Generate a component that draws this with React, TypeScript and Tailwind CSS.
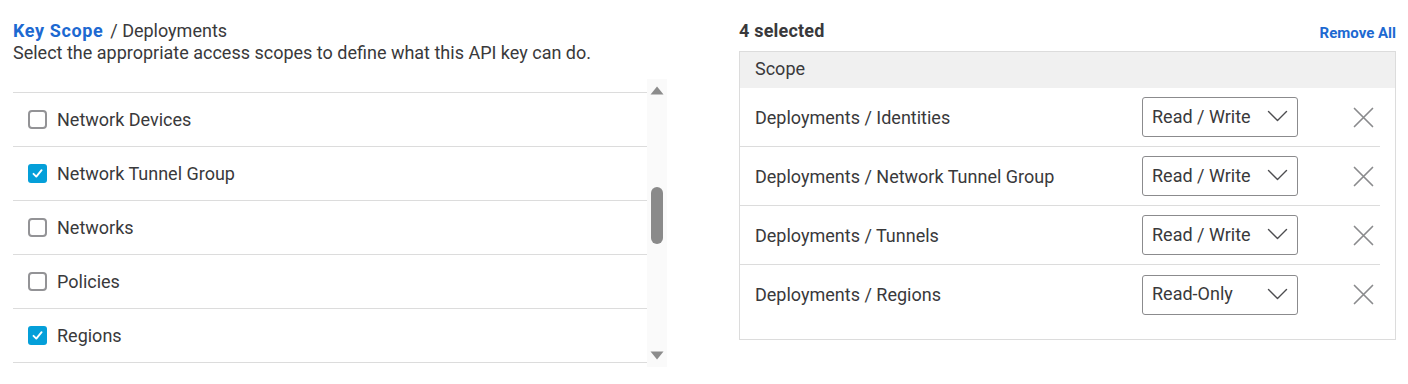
import React from 'react';

const listRows = [
  { label: 'Network Devices', checked: false },
  { label: 'Network Tunnel Group', checked: true },
  { label: 'Networks', checked: false },
  { label: 'Policies', checked: false },
  { label: 'Regions', checked: true },
];

const selected = [
  { scope: 'Deployments / Identities', access: 'Read / Write' },
  { scope: 'Deployments / Network Tunnel Group', access: 'Read / Write' },
  { scope: 'Deployments / Tunnels', access: 'Read / Write' },
  { scope: 'Deployments / Regions', access: 'Read-Only' },
];

function Checkbox({ checked }: { checked: boolean }) {
  if (checked) {
    return (
      <span className="w-[19px] h-[19px] rounded-[3px] bg-[#049fd9] flex items-center justify-center shrink-0">
        <svg width="13" height="13" viewBox="0 0 13 13" fill="none">
          <path d="M2.5 6.8 L5.3 9.6 L10.6 3.2" stroke="white" strokeWidth="1.9" strokeLinecap="round" strokeLinejoin="round" />
        </svg>
      </span>
    );
  }
  return <span className="w-[19px] h-[19px] rounded-[4px] border-2 border-[#939396] bg-white shrink-0" />;
}

function Chevron() {
  return (
    <svg width="21" height="12" viewBox="0 0 21 12" fill="none">
      <path d="M1.5 1.5 L10.5 10.5 L19.5 1.5" stroke="#4d4d50" strokeWidth="1.4" strokeLinecap="round" strokeLinejoin="round" />
    </svg>
  );
}

function CloseIcon() {
  return (
    <svg width="21" height="21" viewBox="0 0 21 21" fill="none">
      <path d="M1.5 1.5 L19.5 19.5 M19.5 1.5 L1.5 19.5" stroke="#8a8b8d" strokeWidth="1.7" strokeLinecap="round" />
    </svg>
  );
}

export default function App() {
  return (
    <div className="w-[1408px] h-[384px] bg-white flex gap-[72px] pl-[13px] pt-[20px] font-['Roboto',sans-serif] text-[#39393b]">
      <div className="w-[654px] flex flex-col">
        <div className="flex items-baseline gap-[7px] text-[18px] leading-[22px]">
          <span className="font-bold text-[#1d69d1] tracking-[0.6px]">Key Scope</span>
          <span>/ Deployments</span>
        </div>
        <p className="text-[18px] leading-[22px]">Select the appropriate access scopes to define what this API key can do.</p>
        <div className="mt-[15px] h-[288px] flex">
          <div className="flex-1">
            {/* previous row, scrolled mostly out of view */}
            <div className="h-[14px] border-b border-[#dcdcdc]" />
            {listRows.map((row) => (
              <div key={row.label} className="h-[54px] border-b border-[#dcdcdc] flex items-center gap-[10px] pl-[15px] text-[18px]">
                <Checkbox checked={row.checked} />
                <span>{row.label}</span>
              </div>
            ))}
          </div>
          <div className="w-[20px] bg-[#fafafa] flex flex-col items-center pt-[7px] pb-[7px]">
            <svg width="14" height="9" viewBox="0 0 14 9">
              <path d="M7 0.5 L13.5 8.5 L0.5 8.5 Z" fill="#8c8c8c" />
            </svg>
            <div className="mt-[92px] w-[12px] h-[57px] rounded-full bg-[#8a8a8a]" />
            <div className="flex-1" />
            <svg width="14" height="9" viewBox="0 0 14 9">
              <path d="M0.5 0.5 L13.5 0.5 L7 8.5 Z" fill="#8c8c8c" />
            </svg>
          </div>
        </div>
      </div>

      <div className="w-[657px] flex flex-col">
        <div className="flex items-end justify-between h-[22px]">
          <span className="text-[18px] font-bold text-[#39393b] leading-[22px] tracking-[0.2px]">4 selected</span>
          <span className="text-[15px] font-bold text-[#1d69d1] leading-[18px]">Remove All</span>
        </div>
        <div className="mt-[9px] h-[289px] border border-[#dcdcdc]">
          <div className="h-[36px] bg-[#f0f0f0] flex items-center pl-[15px] pb-[4px] text-[18px]">Scope</div>
          {selected.map((row, i) => (
            <div
              key={row.scope}
              className={`h-[59px] mr-[15px] flex items-center pl-[15px] text-[18px] ${i < selected.length - 1 ? 'border-b border-[#dcdcdc]' : ''}`}
            >
              <span className="flex-1">{row.scope}</span>
              <div className="w-[156px] h-[40px] border border-[#8b8b8d] rounded-[3px] flex items-center justify-between pl-[9px] pr-[9px] pb-[2px]">
                <span>{row.access}</span>
                <Chevron />
              </div>
              <div className="w-[82px] flex justify-end pr-[6px]">
                <CloseIcon />
              </div>
            </div>
          ))}
        </div>
      </div>
    </div>
  );
}
